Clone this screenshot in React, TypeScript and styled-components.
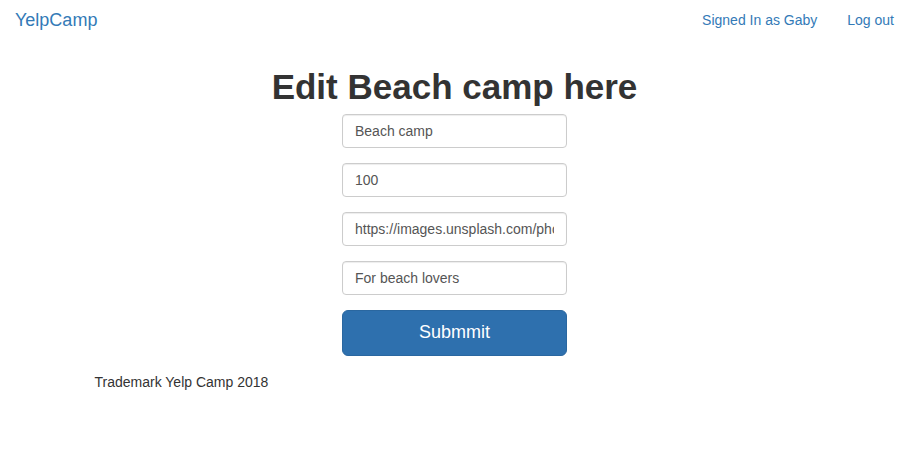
import React from "react";
import styled, { createGlobalStyle } from "styled-components";

const Global = createGlobalStyle`
  html, body { margin: 0; padding: 0; background: #fff; }
  body {
    font-family: "Liberation Sans", Arial, Helvetica, sans-serif;
    font-size: 14px;
    line-height: 1.42857;
    color: #333;
  }
  * { box-sizing: border-box; }
`;

const Page = styled.div`
  width: 909px;
`;

const Navbar = styled.nav`
  height: 50px;
  display: flex;
  align-items: flex-start;
  justify-content: space-between;
`;

const Brand = styled.a`
  padding: 10px 15px;
  font-size: 18px;
  line-height: 20px;
  color: #337ab7;
  text-decoration: none;
`;

const NavLinks = styled.ul`
  list-style: none;
  margin: 0;
  padding: 0;
  display: flex;
`;

const NavLink = styled.a`
  display: block;
  padding: 10px 15px;
  line-height: 20px;
  color: #337ab7;
  text-decoration: none;
`;

const Container = styled.div`
  width: 750px;
  margin: 0 auto;
  padding: 0 15px;
`;

const Heading = styled.h1`
  margin: 18px 0 7px;
  font-size: 35px;
  font-weight: 700;
  line-height: 1.1;
  text-align: center;
  color: #333;
`;

const Form = styled.form`
  width: 225px;
  margin: 0 auto;
`;

const Group = styled.div`
  margin-bottom: 15px;
`;

const Input = styled.input`
  display: block;
  width: 100%;
  height: 34px;
  padding: 6px 12px;
  font-family: inherit;
  font-size: 14px;
  line-height: 1.42857;
  color: #555;
  background: #fff;
  border: 1px solid #ccc;
  border-radius: 4px;
  box-shadow: inset 0 1px 1px rgba(0, 0, 0, 0.075);
  outline: none;
`;

const Button = styled.button`
  display: block;
  width: 100%;
  height: 46px;
  padding: 10px 16px;
  font-family: inherit;
  font-size: 18px;
  line-height: 1.3333;
  color: #fff;
  background: #2e70ae;
  border: 1px solid #2a67a0;
  border-radius: 6px;
  cursor: pointer;
`;

const Footer = styled.p`
  margin: 16px 0 0;
  line-height: 20px;
  color: #333;
`;

export default function App() {
  return (
    <Page>
      <Global />
      <Navbar>
        <Brand href="#">YelpCamp</Brand>
        <NavLinks>
          <li>
            <NavLink href="#">Signed In as Gaby</NavLink>
          </li>
          <li>
            <NavLink href="#">Log out</NavLink>
          </li>
        </NavLinks>
      </Navbar>
      <Container>
        <Heading>Edit Beach camp here</Heading>
        <Form onSubmit={(e) => e.preventDefault()}>
          <Group>
            <Input type="text" defaultValue="Beach camp" />
          </Group>
          <Group>
            <Input type="text" defaultValue="100" />
          </Group>
          <Group>
            <Input type="text" defaultValue="https://images.unsplash.com/photo-1507525428034-b723cf961d3e" />
          </Group>
          <Group>
            <Input type="text" defaultValue="For beach lovers" />
          </Group>
          <Button type="submit">Submmit</Button>
        </Form>
        <Footer>Trademark Yelp Camp 2018</Footer>
      </Container>
    </Page>
  );
}
